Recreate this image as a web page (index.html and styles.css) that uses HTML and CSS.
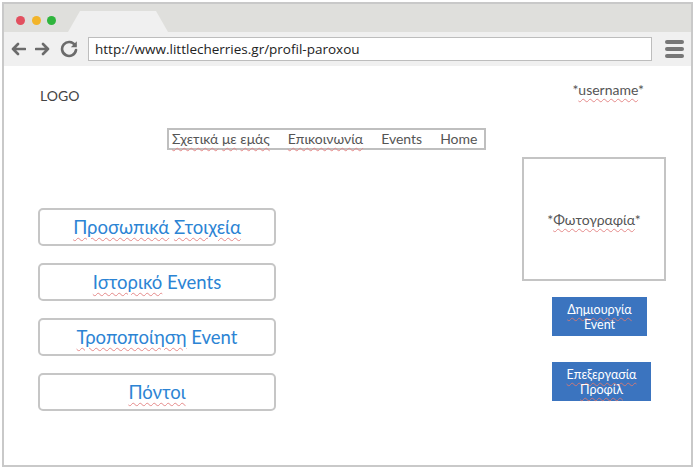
FILE: index.html
```html
<!DOCTYPE html>
<html>
<head>
<meta charset="utf-8">
<link rel="stylesheet" href="styles.css">
</head>
<body>
<div class="frame">
  <div class="tabbar">
    <div class="dots">
      <span class="dot red"></span><span class="dot yellow"></span><span class="dot green"></span>
    </div>
    <div class="tab"></div>
  </div>
  <div class="toolbar">
    <svg class="nav-ic" width="16" height="14" viewBox="0 0 16 14"><path d="M15 7H3M8 2L3 7l5 5" fill="none" stroke="#6b6b6b" stroke-width="2.6" stroke-linecap="round" stroke-linejoin="round"/></svg>
    <svg class="nav-ic" width="16" height="14" viewBox="0 0 16 14"><path d="M1 7h12M8 2l5 5-5 5" fill="none" stroke="#6b6b6b" stroke-width="2.6" stroke-linecap="round" stroke-linejoin="round"/></svg>
    <svg class="nav-ic reload" width="18" height="18" viewBox="0 0 18 18"><path d="M15 5.2A7 7 0 1 0 16 10" fill="none" stroke="#6b6b6b" stroke-width="2.6" stroke-linecap="round"/><path d="M16.8 1.2v6h-6z" fill="#6b6b6b"/></svg>
    <div class="address">http://www.littlecherries.gr/profil-paroxou</div>
    <div class="burger"><span></span><span></span><span></span></div>
  </div>
  <div class="content">
    <div class="header">
      <div class="logo">LOGO</div>
      <div class="user">*<span class="sp">username</span>*</div>
    </div>
    <div class="menu">
      <span><span class="sp">Σχετικά</span> <span class="sp">με</span> <span class="sp">εμάς</span></span>
      <span class="sp">Επικοινωνία</span>
      <span>Events</span>
      <span>Home</span>
    </div>
    <div class="main">
      <div class="left">
        <div class="btn"><span><span class="sp">Προσωπικά</span> <span class="sp">Στοιχεία</span></span></div>
        <div class="btn"><span><span class="sp">Ιστορικό</span> Events</span></div>
        <div class="btn"><span><span class="sp">Τροποποίηση</span> Event</span></div>
        <div class="btn"><span><span class="sp">Πόντοι</span></span></div>
      </div>
      <div class="right">
        <div class="photo"><span>*<span class="sp">Φωτογραφία</span>*</span></div>
        <div class="blue b1"><span><span class="sp">Δημιουργία</span><br>Event</span></div>
        <div class="blue b2"><span><span class="sp">Επεξεργασία</span><br><span class="sp">Προφίλ</span></span></div>
      </div>
    </div>
  </div>
</div>
</body>
</html>
```

FILE: styles.css
```css
* { box-sizing: border-box; }
html, body { margin: 0; padding: 0; background: #fff; }
body { font-family: Lato, "Open Sans", "Noto Sans", sans-serif; }

.frame {
  margin: 2px;
  width: 691px;
  height: 465px;
  border: 2px solid #c9c9c9;
  display: flex;
  flex-direction: column;
  overflow: hidden;
}

.tabbar {
  height: 28px;
  background: #dfdfdc;
  display: flex;
  align-items: flex-end;
  flex: none;
}
.dots {
  display: flex;
  gap: 6.5px;
  margin-left: 12px;
  align-self: flex-start;
  margin-top: 12px;
}
.dot { width: 9px; height: 9px; border-radius: 50%; display: block; }
.red { background: #e2505f; }
.yellow { background: #f2b42a; }
.green { background: #2fb53d; }
.tab {
  width: 100px;
  height: 21px;
  margin-left: 12px;
  background: #f0f0f0;
  clip-path: polygon(0 100%, 12% 0, 88% 0, 100% 100%);
}

.toolbar {
  height: 34px;
  background: #f0f0f0;
  display: flex;
  align-items: center;
  flex: none;
}
.nav-ic { margin-left: 8px; flex: none; }
.nav-ic:first-child { margin-left: 6px; }
.nav-ic + .nav-ic { margin-left: 9px; }
.nav-ic.reload { margin-left: 9px; }
.address {
  margin-left: 10px;
  width: 564px;
  height: 24px;
  background: #fff;
  border: 1px solid #bdbdbd;
  font-family: "Open Sans", sans-serif;
  font-size: 13.5px;
  color: #222;
  line-height: 22px;
  padding-left: 6px;
}
.burger {
  margin-left: 13px;
  display: flex;
  flex-direction: column;
  gap: 3px;
}
.burger span {
  display: block;
  width: 19px;
  height: 4px;
  border-radius: 2px;
  background: #777;
}

.content {
  flex: 1;
  background: #fff;
  padding-top: 14px;
}
.sp {
  text-decoration: underline wavy #e58a8a;
  text-decoration-thickness: 1px;
  text-underline-offset: 3px;
}
.header {
  display: flex;
  justify-content: space-between;
  align-items: flex-start;
  padding: 0 47px 0 36px;
  font-size: 14px;
  line-height: 20px;
  color: #444;
}
.logo { padding-top: 6px; }
.user { color: #555; }

.menu {
  margin: 22px 0 0 163px;
  width: 319px;
  height: 22px;
  border: 2px solid #bfbfbf;
  display: flex;
  gap: 18px;
  padding-left: 3px;
  font-size: 14px;
  line-height: 17px;
  color: #555;
  white-space: nowrap;
}

.main {
  display: flex;
  margin-top: 7px;
}
.left {
  margin-left: 34px;
  padding-top: 51px;
  display: flex;
  flex-direction: column;
  gap: 17px;
}
.btn {
  width: 238px;
  height: 38px;
  border: 2px solid #c6c6c6;
  border-radius: 5px;
  display: flex;
  align-items: center;
  justify-content: center;
  font-size: 18.5px;
  color: #2c84d4;
  padding-bottom: 1px;
  white-space: nowrap;
}
.right {
  margin-left: 246px;
  display: flex;
  flex-direction: column;
  align-items: flex-start;
}
.photo {
  width: 144px;
  height: 124px;
  border: 2px solid #c4c4c4;
  display: flex;
  align-items: center;
  justify-content: center;
  font-size: 14px;
  color: #555;
}
.blue {
  background: #3b74bf;
  color: #fff;
  font-size: 12.5px;
  line-height: 15px;
  text-align: center;
  display: flex;
  align-items: center;
  justify-content: center;
  height: 39px;
  margin-left: 30px;
}
.blue .sp { text-decoration-color: #c77; }
.b1 { width: 95px; margin-top: 16px; }
.b2 { width: 99px; margin-top: 26px; }
```
